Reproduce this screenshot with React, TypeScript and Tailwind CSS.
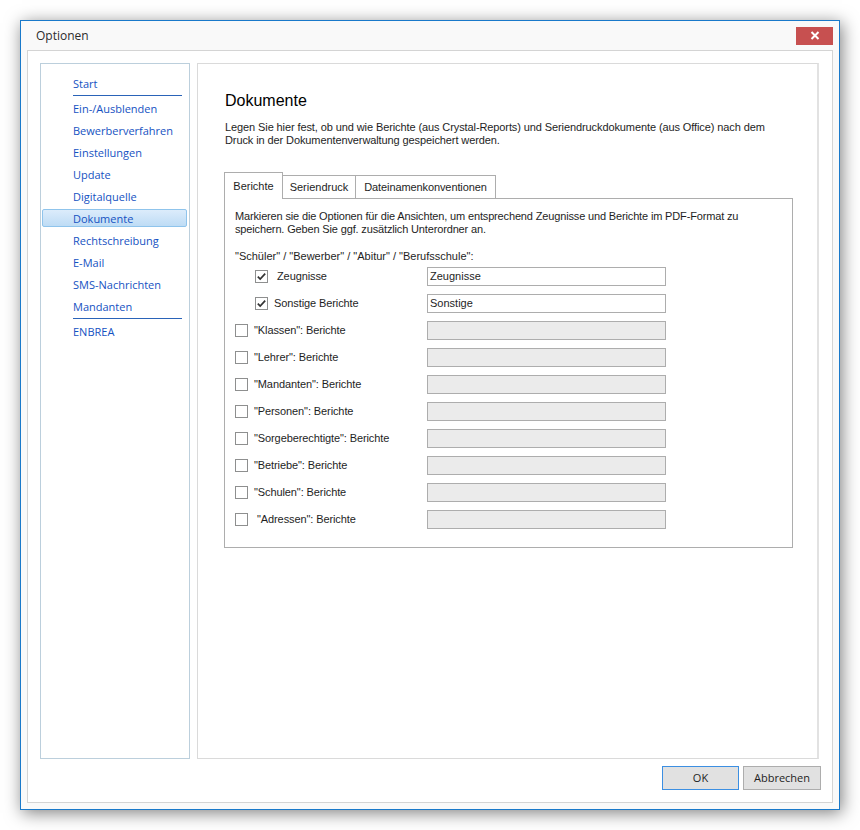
import React from 'react'

const NAV = ['Ein-/Ausblenden', 'Bewerberverfahren', 'Einstellungen', 'Update', 'Digitalquelle', 'Dokumente', 'Rechtschreibung', 'E-Mail', 'SMS-Nachrichten', 'Mandanten']

const ROWS = [
  { label: 'Zeugnisse', value: 'Zeugnisse', checked: true, indent: true, gap: 'ml-[9px]' },
  { label: 'Sonstige Berichte', value: 'Sonstige', checked: true, indent: true, gap: 'ml-[6px]' },
  { label: '"Klassen": Berichte', value: '', checked: false, indent: false, gap: 'ml-[6px]' },
  { label: '"Lehrer": Berichte', value: '', checked: false, indent: false, gap: 'ml-[6px]' },
  { label: '"Mandanten": Berichte', value: '', checked: false, indent: false, gap: 'ml-[6px]' },
  { label: '"Personen": Berichte', value: '', checked: false, indent: false, gap: 'ml-[6px]' },
  { label: '"Sorgeberechtigte": Berichte', value: '', checked: false, indent: false, gap: 'ml-[6px]' },
  { label: '"Betriebe": Berichte', value: '', checked: false, indent: false, gap: 'ml-[6px]' },
  { label: '"Schulen": Berichte', value: '', checked: false, indent: false, gap: 'ml-[6px]' },
  { label: '"Adressen": Berichte', value: '', checked: false, indent: false, gap: 'ml-[9px]' },
]

function Checkbox({ checked }: { checked: boolean }) {
  return (
    <div className="w-[13px] h-[13px] shrink-0 border border-[#8e8f8f] bg-white flex items-center justify-center">
      {checked && (
        <svg width="11" height="11" viewBox="0 0 11 11">
          <path d="M1.8 5.6 L4.2 8 L9.2 2.6" fill="none" stroke="#333" strokeWidth="1.7" />
        </svg>
      )}
    </div>
  )
}

function NavItem({ label, active }: { label: string; active?: boolean }) {
  return (
    <div className="h-[22px] pt-[1px] pl-[1px] pr-[2px]">
      <div className={`h-[18px] pl-[30px] flex items-center rounded-[2px] border ${active ? 'border-[#8fc4ec] bg-gradient-to-b from-[#dcecfb] to-[#bedcf5]' : 'border-transparent'}`}>
        <span className="text-[11px] text-[#1552c2] leading-none pt-[1px]">{label}</span>
      </div>
    </div>
  )
}

export default function App() {
  return (
    <div className="w-[860px] h-[830px] bg-white pt-[20px] pl-[20px]">
      <div className="w-[820px] h-[790px] border border-[#1979ca] bg-[#f9f9f9] flex flex-col shadow-[2px_3px_16px_rgba(0,0,0,0.5)] font-['Liberation_Sans',Arial,sans-serif]">
        {/* title bar */}
        <div className="h-[29px] flex items-center justify-between pl-[15px] pr-[6px]">
          <span className="text-[12px] text-[#2b2b2b] font-['Open_Sans',sans-serif]">Optionen</span>
          <div className="w-[37px] h-[18px] bg-[#c75050] flex items-center justify-center">
            <svg width="10" height="9" viewBox="0 0 10 9">
              <path d="M1.5 1 L8.5 8 M8.5 1 L1.5 8" stroke="#fff" strokeWidth="2" />
            </svg>
          </div>
        </div>

        <div className="flex-1 mx-[6px] mb-[6px] border border-[#d4d4d4] bg-white pt-[12px] pl-[12px] pr-[11px] flex flex-col">
          <div className="flex gap-[7px] h-[696px]">
            {/* sidebar */}
            <div className="w-[150px] h-full border border-[#bccfdc] pt-[9px] font-['Open_Sans',sans-serif]">
              <NavItem label="Start" />
              <div className="ml-[32px] w-[109px] h-[1px] bg-[#2a63b8]" />
              <div className="mt-[2px]">
                {NAV.map(n => <NavItem key={n} label={n} active={n === 'Dokumente'} />)}
              </div>
              <div className="ml-[32px] w-[109px] h-[1px] bg-[#2a63b8]" />
              <div className="mt-[2px]">
                <NavItem label="ENBREA" />
              </div>
            </div>

            {/* main */}
            <div className="w-[622px] h-full border border-[#dadada] border-r-2 border-r-[#e2e2e2] pl-[26px] pt-[27px]">
              <h1 className="pl-[1px] text-[16px] leading-[20px] text-black">Dokumente</h1>
              <p className="mt-[10px] pl-[1px] text-[11px] leading-[13px] tracking-[-0.1px] text-[#1e1e1e]">
                Legen Sie hier fest, ob und wie Berichte (aus Crystal-Reports) und Seriendruckdokumente (aus Office) nach dem<br />
                Druck in der Dokumentenverwaltung gespeichert werden.
              </p>

              <div className="mt-[25px] w-[569px]">
                <div className="flex items-end text-[11px] text-[#1e1e1e]">
                  <div className="relative z-10 -mb-[1px] w-[59px] h-[27px] border border-b-0 border-[#adadad] bg-white flex items-center justify-center">Berichte</div>
                  <div className="w-[73px] h-[23px] border-t border-r border-[#adadad] bg-white flex items-center justify-center">Seriendruck</div>
                  <div className="w-[140px] h-[23px] border-t border-r border-[#adadad] bg-white flex items-center justify-center tracking-[-0.1px]">Dateinamenkonventionen</div>
                </div>
                <div className="h-[350px] border border-[#adadad] pl-[10px] pt-[11px] text-[11px] leading-[13px] text-[#1e1e1e]">
                  <p className="tracking-[-0.15px]">
                    Markieren sie die Optionen für die Ansichten, um entsprechend Zeugnisse und Berichte im PDF-Format zu<br />
                    speichern. Geben Sie ggf. zusätzlich Unterordner an.
                  </p>
                  <p className="mt-[14px]">"Schüler" / "Bewerber" / "Abitur" / "Berufsschule":</p>
                  <div>
                    {ROWS.map(r => (
                      <div key={r.label} className="h-[27px] flex items-center">
                        <div className={`w-[192px] flex items-center ${r.indent ? 'pl-[20px]' : ''}`}>
                          <Checkbox checked={r.checked} />
                          <span className={`${r.gap} tracking-[-0.1px]`}>{r.label}</span>
                        </div>
                        <div className={`w-[239px] h-[19px] border border-[#adadad] flex items-center pl-[2px] ${r.value ? 'bg-white' : 'bg-[#ebebeb]'}`}>
                          {r.value}
                        </div>
                      </div>
                    ))}
                  </div>
                </div>
              </div>
            </div>
          </div>

          {/* buttons */}
          <div className="mt-[7px] flex justify-end gap-[4px] font-['Open_Sans',sans-serif] text-[11px] text-[#1e1e1e]">
            <button className="w-[77px] h-[24px] border border-[#3c8fe2] bg-[#e1e1e1]">OK</button>
            <button className="w-[78px] h-[24px] border border-[#adadad] bg-[#e1e1e1]">Abbrechen</button>
          </div>
        </div>
      </div>
    </div>
  )
}
